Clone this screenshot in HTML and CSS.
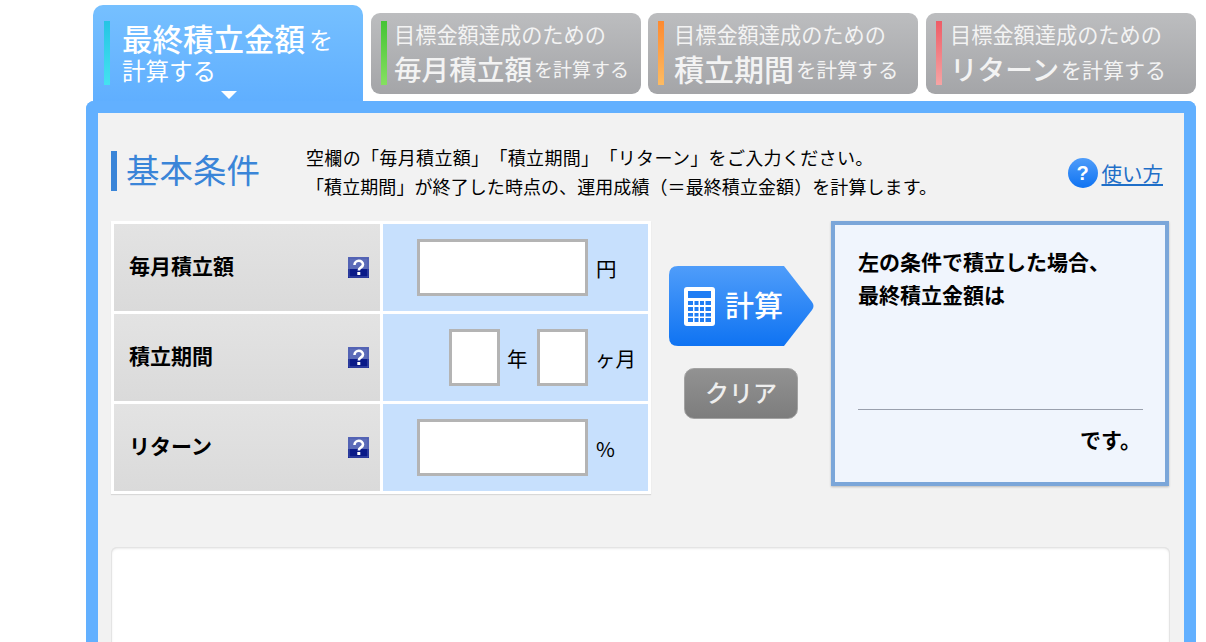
FILE: index.html
```html
<!DOCTYPE html>
<html lang="ja">
<head>
<meta charset="utf-8">
<title>最終積立金額を計算する</title>
<link rel="stylesheet" href="styles.css">
</head>
<body>
<div class="page">
  <nav class="tabs">
    <a class="tab tab-active">
      <span class="tab-bar bar-cyan"></span>
      <span class="tab-text">
        <span class="active-line1"><span class="big-active">最終積立金額</span><span class="wo-active">を</span></span>
        <span class="active-line2">計算する</span>
      </span>
      <span class="tab-arrow"></span>
    </a>
    <a class="tab tab-idle">
      <span class="tab-bar bar-green"></span>
      <span class="tab-text">
        <span class="idle-line1">目標金額達成のための</span>
        <span class="idle-line2"><span class="big-idle">毎月積立額</span>を計算する</span>
      </span>
    </a>
    <a class="tab tab-idle tab-term">
      <span class="tab-bar bar-orange"></span>
      <span class="tab-text">
        <span class="idle-line1">目標金額達成のための</span>
        <span class="idle-line2"><span class="big-idle">積立期間</span>を計算する</span>
      </span>
    </a>
    <a class="tab tab-idle tab-return">
      <span class="tab-bar bar-red"></span>
      <span class="tab-text">
        <span class="idle-line1">目標金額達成のための</span>
        <span class="idle-line2"><span class="big-idle">リターン</span>を計算する</span>
      </span>
    </a>
  </nav>

  <main class="panel">
    <header class="head">
      <h1 class="title">基本条件</h1>
      <p class="lead">空欄の「毎月積立額」「積立期間」「リターン」をご入力ください。<br>「積立期間」が終了した時点の、運用成績（＝最終積立金額）を計算します。</p>
      <a class="howto">
        <span class="howto-icon">?</span>
        <span class="howto-link">使い方</span>
      </a>
    </header>

    <section class="calc">
      <div class="form">
        <div class="label"><span class="label-text">毎月積立額</span>
          <svg class="qmark" viewBox="0 0 21 21"><rect width="21" height="21" fill="#5c6cb8"/><rect y="12" width="21" height="9" fill="#0a1a88"/><rect x="1" y="1" width="19" height="19" fill="none" stroke="#4a5ab0"/><path d="M6.500 8 C6.500 2.500 15 2.500 15 7.500 C15 10.500 10.800 10.300 10.800 13.500" fill="none" stroke="#fff" stroke-width="2.600"/><rect x="9.300" y="15" width="3" height="3" fill="#fff"/></svg>
        </div>
        <div class="value">
          <span class="field field-wide"></span><span class="unit">円</span>
        </div>
        <div class="label"><span class="label-text">積立期間</span>
          <svg class="qmark" viewBox="0 0 21 21"><rect width="21" height="21" fill="#5c6cb8"/><rect y="12" width="21" height="9" fill="#0a1a88"/><rect x="1" y="1" width="19" height="19" fill="none" stroke="#4a5ab0"/><path d="M6.500 8 C6.500 2.500 15 2.500 15 7.500 C15 10.500 10.800 10.300 10.800 13.500" fill="none" stroke="#fff" stroke-width="2.600"/><rect x="9.300" y="15" width="3" height="3" fill="#fff"/></svg>
        </div>
        <div class="value value-term">
          <span class="field field-small"></span><span class="unit unit-year">年</span><span class="field field-small"></span><span class="unit">ヶ月</span>
        </div>
        <div class="label"><span class="label-text">リターン</span>
          <svg class="qmark" viewBox="0 0 21 21"><rect width="21" height="21" fill="#5c6cb8"/><rect y="12" width="21" height="9" fill="#0a1a88"/><rect x="1" y="1" width="19" height="19" fill="none" stroke="#4a5ab0"/><path d="M6.500 8 C6.500 2.500 15 2.500 15 7.500 C15 10.500 10.800 10.300 10.800 13.500" fill="none" stroke="#fff" stroke-width="2.600"/><rect x="9.300" y="15" width="3" height="3" fill="#fff"/></svg>
        </div>
        <div class="value">
          <span class="field field-wide"></span><span class="unit">%</span>
        </div>
      </div>

      <div class="actions">
        <button class="btn-calc" type="button">
          <svg class="btn-calc-shape" viewBox="0 0 145 80">
            <defs><linearGradient id="calcfill" x1="0" y1="0" x2="0" y2="1"><stop offset="0" stop-color="#4f9dfa"/><stop offset="1" stop-color="#0f73f2"/></linearGradient></defs>
            <path d="M9 0 H115 L143 36 Q146 40 143 44 L115 80 H9 Q0 80 0 71 V9 Q0 0 9 0Z" fill="url(#calcfill)"/>
          </svg>
          <svg class="btn-calc-icon" viewBox="0 0 31 39">
            <rect width="31" height="39" rx="3" fill="#fff"/>
            <rect x="4" y="4" width="23" height="7" fill="#1f7df4"/>
            <g fill="#1f7df4">
              <rect x="4" y="14" width="5" height="4"/><rect x="10.500" y="14" width="4" height="4"/><rect x="16" y="14" width="4" height="4"/><rect x="21.500" y="14" width="5.500" height="4"/>
              <rect x="4" y="20" width="5" height="4"/><rect x="10.500" y="20" width="4" height="4"/><rect x="16" y="20" width="4" height="4"/><rect x="21.500" y="20" width="5.500" height="4"/>
              <rect x="4" y="26" width="5" height="3.500"/><rect x="10.500" y="26" width="4" height="3.500"/><rect x="16" y="26" width="4" height="3.500"/><rect x="21.500" y="26" width="5.500" height="3.500"/>
              <rect x="4" y="31" width="5" height="4"/><rect x="10.500" y="31" width="4" height="4"/><rect x="16" y="31" width="4" height="4"/><rect x="21.500" y="31" width="5.500" height="4"/>
            </g>
          </svg>
          <span class="btn-calc-text">計算</span>
        </button>
        <button class="btn-clear" type="button">クリア</button>
      </div>

      <aside class="result">
        <p class="result-text">左の条件で積立した場合、<br>最終積立金額は</p>
        <p class="result-foot">です。</p>
      </aside>
    </section>

    <section class="note"></section>
  </main>
</div>
</body>
</html>
```

FILE: styles.css
```css
* { box-sizing: border-box; }
html, body { margin: 0; height: 642px; overflow: hidden; background: #fff; }
body { font-family: "Noto Sans CJK JP", "Liberation Sans", sans-serif; color: #000; text-spacing-trim: space-all; }

.page { margin-left: 86px; width: 1110px; }

.tabs { display: flex; gap: 8px; padding: 5px 0 0 7px; height: 101px; }
.tab { position: relative; display: flex; width: 270px; color: #fff; }
.tab-text { display: flex; flex-direction: column; white-space: nowrap; }
.tab-bar { width: 6px; height: 64px; margin-top: 16px; flex: none; }
.tab-active { height: 96px; border-radius: 10px 10px 0 0; background: linear-gradient(#76c0ff, #60afff); padding-left: 11px; }
.tab-active .tab-text { margin-left: 12px; margin-top: 13px; }
.tab-idle { height: 81px; margin-top: 8px; border-radius: 9px; background: linear-gradient(#bcbdbf, #a4a5a8); padding-left: 10px; color: #f3f3f3; }
.tab-idle .tab-bar { margin-top: 8px; }
.tab-idle .tab-text { margin-left: 7px; margin-top: 7px; }
.tab-term { margin-left: -1px; }
.tab-term .tab-text { margin-left: 10px; }
.tab-return .tab-text { margin-left: 8px; }
.bar-cyan { background: linear-gradient(#25c4e4, #45e2f0); }
.bar-green { background: linear-gradient(#45c435, #85e060); }
.bar-orange { background: linear-gradient(#fd8a30, #fdbb62); }
.bar-red { background: linear-gradient(#ee5c66, #f6a4a4); }

.active-line1 { display: flex; align-items: flex-end; height: 40px; line-height: 40px; }
.big-active { font-size: 30.500px; font-weight: 500; }
.wo-active { font-size: 24px; line-height: 38px; margin-left: 4px; }
.active-line2 { font-size: 23.500px; line-height: 30px; margin-top: -3px; }
.tab-arrow { position: absolute; left: 128px; top: 86px; width: 0; height: 0; border-style: solid; border-width: 8px 8px 0; border-color: #fff transparent transparent; }

.idle-line1 { font-size: 21.200px; line-height: 28px; }
.idle-line2 { display: flex; align-items: flex-end; font-size: 19px; line-height: 34px; margin-top: 2px; }
.big-idle { font-size: 27.600px; font-weight: 500; margin-right: 2px; line-height: 36px; }
.tab-term .idle-line2 { font-size: 20.500px; }
.tab-term .big-idle { font-size: 30px; }
.tab-return .idle-line2 { font-size: 21px; }

.panel { height: 560px; border: 12px solid #62b0ff; border-bottom: 0; border-radius: 8px 8px 0 0; background: #f2f2f2; padding: 38px 14px 0 13px; }

.head { display: flex; align-items: flex-start; height: 70px; }
.title { margin: 0; width: 195px; height: 40px; border-left: 6px solid #3a85d8; padding-left: 9px; font-size: 33.500px; line-height: 36px; font-weight: 400; color: #3a85d8; white-space: nowrap; }
.lead { margin: -8px 0 0; font-size: 18px; line-height: 29px; letter-spacing: 0.080px; white-space: nowrap; flex: 1; }
.lead::first-line { letter-spacing: 0.340px; }
.howto { display: flex; align-items: center; margin-top: 7px; margin-right: 7px; gap: 4px; }
.howto-icon { width: 30px; height: 30px; border-radius: 50%; background: linear-gradient(#4f9dfa, #0f73f2); color: #fff; font: bold 20px/30px "Liberation Sans", sans-serif; text-align: center; }
.howto-link { font-size: 20.500px; line-height: 30px; color: #1f6fc8; text-decoration: underline; }

.calc { display: flex; align-items: flex-start; }

.form { display: grid; grid-template-columns: 266px 265px; grid-auto-rows: 87px; gap: 3px; width: 540px; height: 273px; padding: 3px; background: #fff; box-shadow: 0 1px 1px #d8d8d8; }
.label { display: flex; align-items: center; justify-content: space-between; padding: 0 11px 0 15px; background: linear-gradient(#e3e3e3, #dadada); font-size: 21px; font-weight: 700; }
.label-text { margin-bottom: 5px; }
.qmark { width: 21px; height: 21px; flex: none; }
.value { display: flex; align-items: center; justify-content: flex-end; background: #c7e0fd; padding-right: 13px; }
.field { display: block; height: 57px; background: #fff; border: 3px solid #b4b4b4; }
.field-wide { width: 171px; margin-right: 8px; }
.field-small { width: 51px; margin-right: 7px; }
.unit { width: 39px; font-size: 20.500px; line-height: 30px; white-space: nowrap; }
.value-term .unit { width: 40px; }
.value-term .unit-year { width: 30px; }

.actions { display: flex; flex-direction: column; align-items: flex-start; width: 145px; margin: 45px 0 0 18px; gap: 22px; }
.btn-calc { position: relative; display: flex; align-items: center; width: 145px; height: 80px; padding: 0 0 0 15px; border: 0; background: none; color: #fff; font-family: inherit; }
.btn-calc-shape { position: absolute; left: 0; top: 0; width: 145px; height: 80px; }
.btn-calc-icon { position: relative; width: 31px; height: 39px; flex: none; }
.btn-calc-text { position: relative; margin: -4px 0 0 10px; font-size: 29px; font-weight: 500; line-height: 40px; white-space: nowrap; }
.btn-clear { width: 114px; height: 51px; margin-left: 15px; padding: 0 0 4px; border: 1px solid #a2a2a2; border-radius: 10px; background: linear-gradient(#929292, #7d7d7d); color: #eee; font-family: inherit; font-size: 24px; font-weight: 500; line-height: 44px; text-align: center; }

.result { width: 338px; height: 265px; margin-left: 17px; padding: 20px 22px 0 23px; background: #f0f5fd; border: 4px solid #7ba6d9; box-shadow: 0 1px 2px #bbb; font-weight: 700; font-size: 21px; line-height: 33px; }
.result-text { margin: 0; height: 165px; white-space: nowrap; border-bottom: 1px solid #9aa0ad; }
.result-foot { margin: 13px 2px 0 0; text-align: right; }

.note { height: 200px; margin-top: 53px; background: #fff; border-radius: 6px; box-shadow: inset 0 0 0 1px #e4e4e4, inset 0 1px 3px #d8d8d8; }
```
